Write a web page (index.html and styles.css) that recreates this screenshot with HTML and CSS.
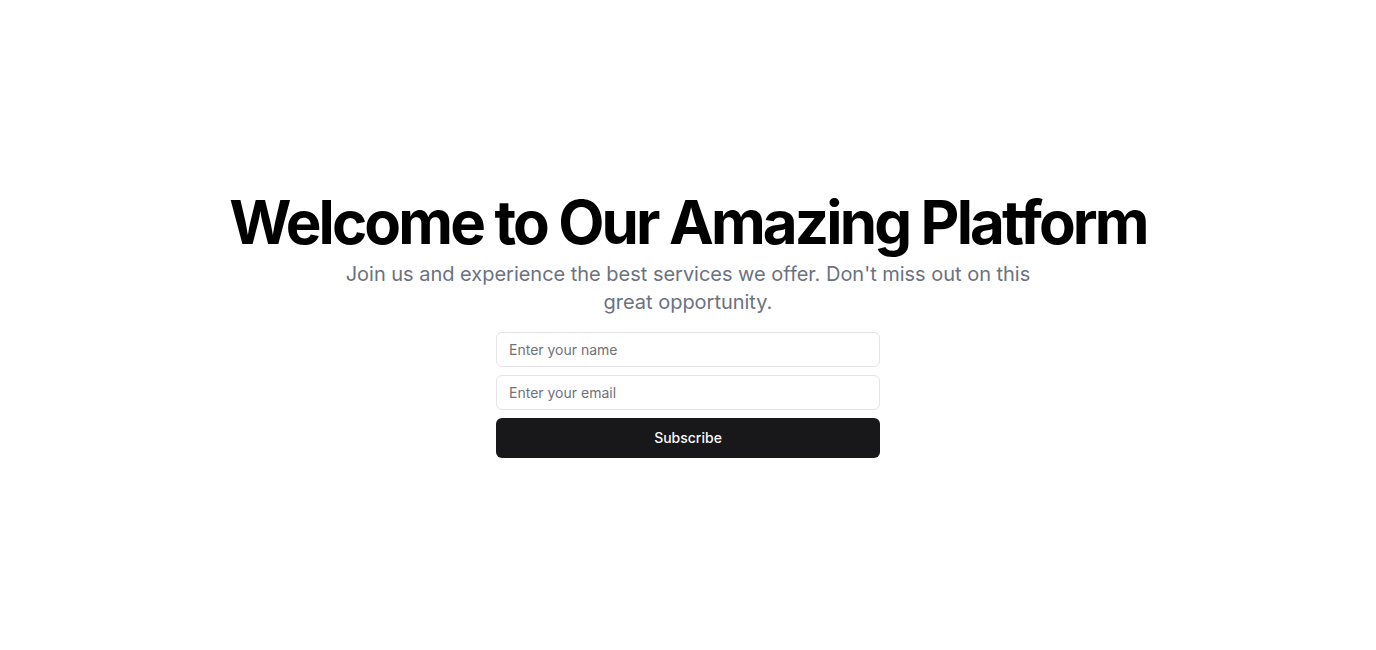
FILE: index.html
```html
<!DOCTYPE html>
<html lang="en">
<head>
<meta charset="utf-8">
<title>Welcome</title>
<link rel="stylesheet" href="styles.css">
</head>
<body>
<main class="page">
  <section class="hero">
    <div class="intro">
      <h1 class="title">Welcome to Our Amazing Platform</h1>
      <p class="lead">Join us and experience the best services we offer. Don't miss out on this great opportunity.</p>
    </div>
    <form class="signup">
      <input class="field" type="text" placeholder="Enter your name">
      <input class="field" type="email" placeholder="Enter your email">
      <button class="submit" type="submit">Subscribe</button>
    </form>
  </section>
</main>
</body>
</html>
```

FILE: styles.css
```css
* { box-sizing: border-box; }
html, body { margin: 0; padding: 0; }
body {
  font-family: Inter, "Noto Sans", sans-serif;
  background: #ffffff;
  color: #09090b;
}
.page {
  min-height: 650px;
  display: flex;
  align-items: center;
  justify-content: center;
}
.hero {
  display: flex;
  flex-direction: column;
  align-items: center;
  gap: 16px;
  text-align: center;
  width: 100%;
}
.intro {
  display: flex;
  flex-direction: column;
  align-items: center;
  gap: 8px;
}
.title {
  margin: 0;
  font-size: 60px;
  line-height: 60px;
  font-weight: 700;
  letter-spacing: -2.86px;
  color: #000;
}
.lead {
  margin: 0;
  max-width: 700px;
  font-size: 20px;
  line-height: 28px;
  letter-spacing: -0.02px;
  color: #6b7280;
}
.signup {
  width: 384px;
  display: flex;
  flex-direction: column;
  gap: 8px;
}
.field {
  height: 35px;
  width: 100%;
  border: 1px solid #e4e4e7;
  border-radius: 6px;
  padding: 0 12px;
  font-family: inherit;
  font-size: 14px;
  color: #09090b;
  background: #fff;
  outline: none;
}
.field::placeholder { color: #71717a; }
.submit {
  height: 40px;
  width: 100%;
  border: none;
  border-radius: 6px;
  background: #18181b;
  color: #fafafa;
  font-family: inherit;
  font-size: 14px;
  font-weight: 500;
  line-height: 39px;
  padding: 0 0 1px;
  cursor: pointer;
}
```
